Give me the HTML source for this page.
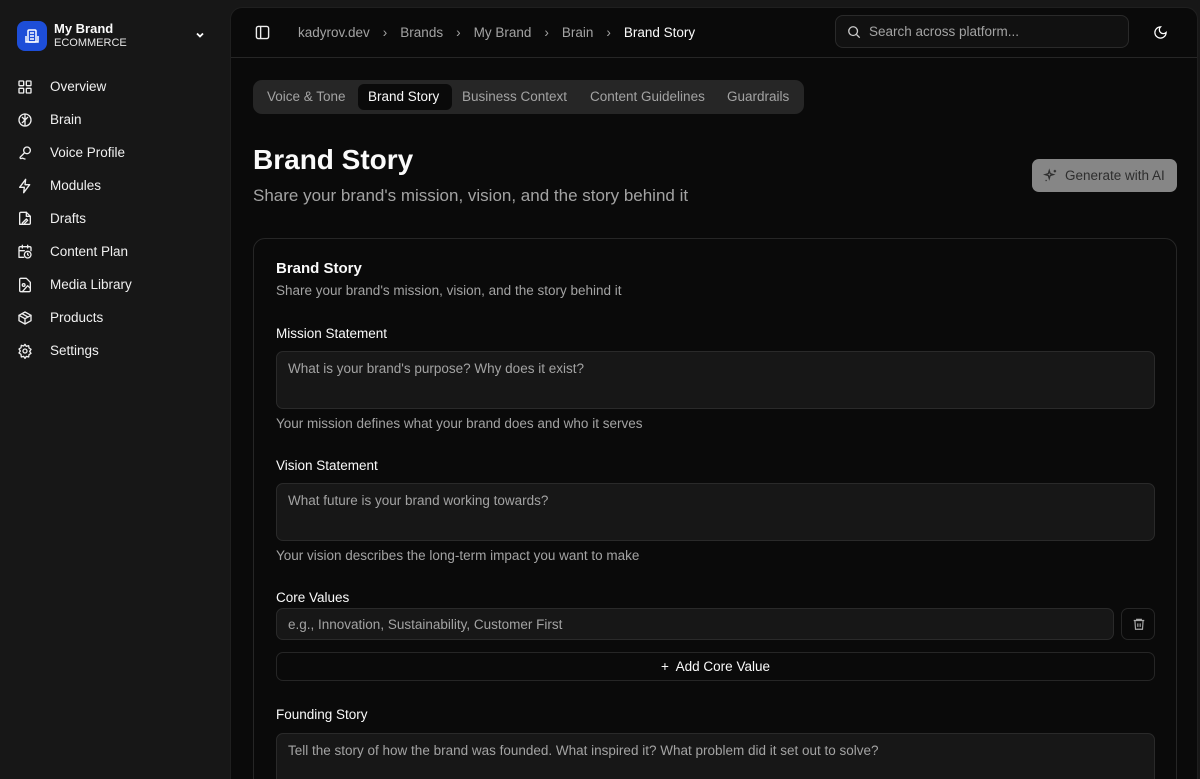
<!DOCTYPE html>
<html><head><meta charset="utf-8"><style>
*{box-sizing:border-box;margin:0;padding:0}
html,body{width:1200px;height:779px;overflow:hidden}
body{background:#171717;font-family:"Liberation Sans",sans-serif;color:#fafafa;position:relative}
.side{position:absolute;left:0;top:0;width:230px;height:779px}
.logo{position:absolute;left:17px;top:21px;width:30px;height:30px;border-radius:8px;background:#1d4ed8;display:flex;align-items:center;justify-content:center}
.bn{position:absolute;left:54px;top:21px;font-size:13px;font-weight:bold}
.bs{position:absolute;left:54px;top:37px;font-size:11px;color:#e5e5e5}
.chev{position:absolute;left:194px;top:29px}
.nav{position:absolute;left:17px;top:70px}
.nav div{height:33px;display:flex;align-items:center;font-size:13.5px;color:#f0f0f0}
.nav svg{width:16px;height:16px;margin-right:17px;fill:none;stroke:#eee;stroke-width:2;stroke-linecap:round;stroke-linejoin:round}
.main{position:absolute;left:230px;top:7px;width:968px;height:772px;background:#0a0a0a;border-radius:12px 12px 0 0;border:1px solid #1f1f1f;border-bottom:none;overflow:hidden}
.hdr{height:50px;border-bottom:1px solid #262626;position:relative}
.crumb{position:absolute;left:67px;top:17px;font-size:13.5px;color:#a3a3a3;display:flex;gap:13px;align-items:center}
.crumb b{font-weight:normal;color:#fafafa}
.search{position:absolute;left:604px;top:7px;width:294px;height:33px;border:1px solid #2a2a2a;background:#111;border-radius:8px;font-size:13.5px;color:#a3a3a3;padding:8px 0 0 33px}
.tabs{position:absolute;left:22px;top:72px;width:551px;height:34px;background:#262626;border-radius:9px}
.tabs span{position:absolute;top:9px;font-size:13.5px;color:#a3a3a3}
.tabs .act{position:absolute;left:105px;top:4px;width:94px;height:26px;background:#0a0a0a;border-radius:6px}
h1{position:absolute;left:22px;top:136px;font-size:28px;font-weight:bold}
.sub{position:absolute;left:22px;top:178px;font-size:17px;color:#a3a3a3}
.gen{position:absolute;left:801px;top:151px;width:145px;height:33px;background:#868686;border-radius:7px;color:#2e2e2e;font-size:13.5px;padding:9px 0 0 33px}
.card{position:absolute;left:22px;top:230px;width:924px;height:600px;border:1px solid #262626;border-radius:12px}
.t{position:absolute;left:22px}
.lbl{font-size:13.5px;color:#fafafa}
.hint{font-size:13.5px;color:#a3a3a3}
.ta{position:absolute;left:22px;width:879px;border:1px solid #2a2a2a;background:#171717;border-radius:7px;font-size:13.5px;color:#a3a3a3;padding:9px 11px}
</style></head><body>
<div class="side">
<div class="logo"><svg width="16" height="16" viewBox="0 0 16 16" fill="none" stroke="#fff" stroke-width="1.5"><rect x="4" y="2" width="8" height="12" rx="1"/><path d="M2 8v6h12V8M6 5h4M6 8h4M6 11h4"/></svg></div>
<div class="bn">My Brand</div><div class="bs">ECOMMERCE</div>
<svg class="chev" width="12" height="12" viewBox="0 0 12 12" fill="none" stroke="#fff" stroke-width="1.8"><path d="M3 4.5l3 3 3-3"/></svg>
<div class="nav">
<div><svg viewBox="0 0 24 24"><rect x="3" y="3" width="7" height="7" rx="1"/><rect x="14" y="3" width="7" height="7" rx="1"/><rect x="3" y="14" width="7" height="7" rx="1"/><rect x="14" y="14" width="7" height="7" rx="1"/></svg>Overview</div>
<div><svg viewBox="0 0 24 24"><circle cx="12" cy="12" r="9"/><path d="M12 3v18M8 8l4 4 4-4M8 16l4-4"/></svg>Brain</div>
<div><svg viewBox="0 0 24 24"><circle cx="15" cy="8" r="5"/><path d="M11 12l-6 6c-1 1 0 3 2 2 2-1 3 1 5 1"/></svg>Voice Profile</div>
<div><svg viewBox="0 0 24 24"><path d="M13 2L4 14h7l-1 8 9-12h-7z"/></svg>Modules</div>
<div><svg viewBox="0 0 24 24"><path d="M14 2H6a2 2 0 0 0-2 2v16h14a2 2 0 0 0 2-2V8z"/><path d="M14 2v6h6M8 18l6-6 2 2-6 6H8z"/></svg>Drafts</div>
<div><svg viewBox="0 0 24 24"><path d="M21 10V6a2 2 0 0 0-2-2H5a2 2 0 0 0-2 2v14h7M16 2v4M8 2v4M3 10h8"/><circle cx="16" cy="16" r="5"/><path d="M16 14v2l1 1"/></svg>Content Plan</div>
<div><svg viewBox="0 0 24 24"><path d="M14 2H6a2 2 0 0 0-2 2v16a2 2 0 0 0 2 2h12a2 2 0 0 0 2-2V8z"/><circle cx="10" cy="12" r="2"/><path d="M20 17l-4-4-8 9"/></svg>Media Library</div>
<div><svg viewBox="0 0 24 24"><path d="M21 8L12 3 3 8v8l9 5 9-5z"/><path d="M3 8l9 5 9-5M12 13v8M7.5 5.5l9 5"/></svg>Products</div>
<div><svg viewBox="0 0 24 24"><circle cx="12" cy="12" r="3"/><path d="M12 2l2 3 3.5-1 .5 3.5 3 2-2 3 2 3-3 2-.5 3.5-3.5-1-2 3-2-3-3.5 1L6 17l-3-2 2-3-2-3 3-2 .5-3.5 3.5 1z"/></svg>Settings</div>
</div></div>
<div class="main">
<div class="hdr">
<svg style="position:absolute;left:24px;top:17px" width="15" height="15" viewBox="0 0 16 16" fill="none" stroke="#eee" stroke-width="1.5"><rect x="1.5" y="1.5" width="13" height="13" rx="2"/><path d="M6 2v12"/></svg>
<div class="crumb">kadyrov.dev<span>›</span>Brands<span>›</span>My Brand<span>›</span>Brain<span>›</span><b>Brand Story</b></div>
<div class="search"><svg style="position:absolute;left:11px;top:9px" width="14" height="14" viewBox="0 0 16 16" fill="none" stroke="#ccc" stroke-width="1.5"><circle cx="7" cy="7" r="5"/><path d="M11 11l3.5 3.5"/></svg>Search across platform...</div>
<svg style="position:absolute;left:922px;top:17px" width="15" height="15" viewBox="0 0 24 24" fill="none" stroke="#fff" stroke-width="2"><path d="M12 3a6 6 0 0 0 9 9 9 9 0 1 1-9-9z"/></svg>
</div>
<div class="tabs"><div class="act"></div>
<span style="left:14px">Voice &amp; Tone</span><span style="left:115px;color:#fafafa">Brand Story</span><span style="left:209px">Business Context</span><span style="left:337px">Content Guidelines</span><span style="left:474px">Guardrails</span></div>
<h1>Brand Story</h1>
<div class="sub">Share your brand's mission, vision, and the story behind it</div>
<div class="gen"><svg style="position:absolute;left:11px;top:9px" width="15" height="15" viewBox="0 0 24 24" fill="none" stroke="#2e2e2e" stroke-width="2"><path d="M10 4l1.5 5 5 1.5-5 1.5L10 17l-1.5-5-5-1.5 5-1.5zM19 3v4M17 5h4M5 19v2"/></svg>Generate with AI</div>
<div class="card">
<div class="t" style="top:21px;font-size:15px;font-weight:bold">Brand Story</div>
<div class="t hint" style="top:44px">Share your brand's mission, vision, and the story behind it</div>
<div class="t lbl" style="top:87px">Mission Statement</div>
<div class="ta" style="top:112px;height:58px">What is your brand's purpose? Why does it exist?</div>
<div class="t hint" style="top:177px">Your mission defines what your brand does and who it serves</div>
<div class="t lbl" style="top:219px">Vision Statement</div>
<div class="ta" style="top:244px;height:58px">What future is your brand working towards?</div>
<div class="t hint" style="top:309px">Your vision describes the long-term impact you want to make</div>
<div class="t lbl" style="top:351px">Core Values</div>
<div class="ta" style="top:369px;height:32px;width:838px;padding-top:8px">e.g., Innovation, Sustainability, Customer First</div>
<div style="position:absolute;left:867px;top:369px;width:34px;height:32px;border:1px solid #262626;border-radius:7px"><svg style="position:absolute;left:10px;top:8px" width="14" height="14" viewBox="0 0 24 24" fill="none" stroke="#aaa" stroke-width="2"><path d="M3 6h18M8 6V4h8v2M5 6l1 15h12l1-15M10 11v6M14 11v6"/></svg></div>
<div style="position:absolute;left:22px;top:413px;width:879px;height:29px;border:1px solid #262626;border-radius:7px;font-size:13.5px;text-align:center;padding-top:6px">+&nbsp; Add Core Value</div>
<div class="t lbl" style="top:468px">Founding Story</div>
<div class="ta" style="top:494px;height:100px">Tell the story of how the brand was founded. What inspired it? What problem did it set out to solve?</div>
</div>
</div>
</body></html>
